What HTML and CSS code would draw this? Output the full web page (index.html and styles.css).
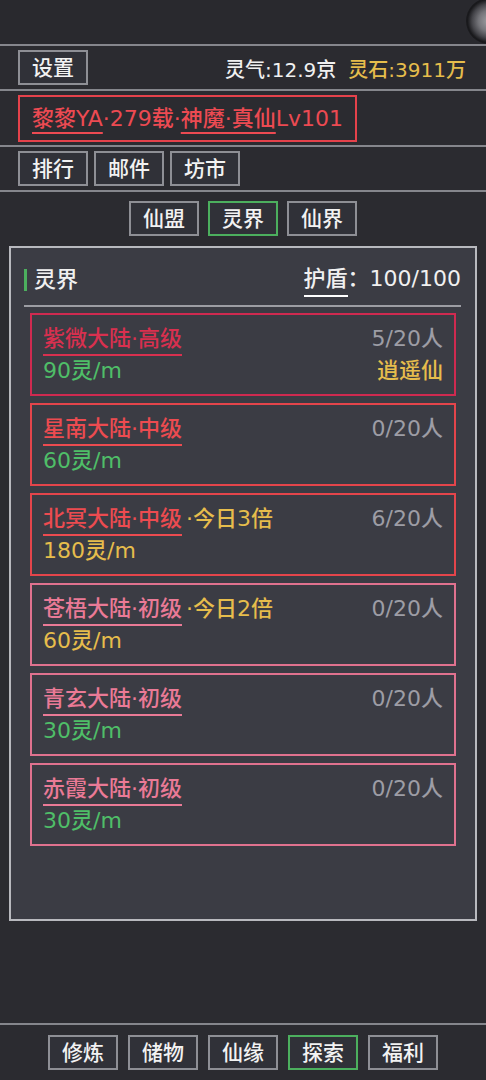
FILE: index.html
```html
<!DOCTYPE html>
<html lang="zh-CN">
<head>
  <meta charset="UTF-8" />
  <meta name="viewport" content="width=device-width, initial-scale=1.0"/>
  <title>灵界</title>
  <link rel="stylesheet" href="styles.css">
</head>
<body>
  <div class="app">
    <div class="topbar">
      <div class="float-btn"></div>
    </div>

    <div class="row row-stats">
      <button class="btn">设置</button>
      <div class="stats">
        <span class="stat">灵气:12.9京</span>
        <span class="stat gold">灵石:3911万</span>
      </div>
    </div>

    <div class="row row-name">
      <div class="name-box">
        <span class="ul">黎黎YA</span>·279载·<span class="ul">神魔·真仙</span>Lv101
      </div>
    </div>

    <div class="row row-menu">
      <button class="btn">排行</button>
      <button class="btn">邮件</button>
      <button class="btn">坊市</button>
    </div>

    <div class="tabs">
      <button class="btn">仙盟</button>
      <button class="btn active">灵界</button>
      <button class="btn">仙界</button>
    </div>

    <div class="panel">
      <div class="panel-head">
        <div class="panel-title">灵界</div>
        <div class="shield"><span class="shield-label">护盾</span>：100/100</div>
      </div>

      <div class="cards">
        <div class="card crimson">
          <div class="card-line">
            <span class="card-name">紫微大陆·高级</span>
            <span class="count">5/20人</span>
          </div>
          <div class="card-line">
            <span class="rate green">90灵/m</span>
            <span class="owner">逍遥仙</span>
          </div>
        </div>

        <div class="card red">
          <div class="card-line">
            <span class="card-name">星南大陆·中级</span>
            <span class="count">0/20人</span>
          </div>
          <div class="card-line">
            <span class="rate green">60灵/m</span>
          </div>
        </div>

        <div class="card red">
          <div class="card-line">
            <span class="card-name">北冥大陆·中级</span>
            <span class="bonus">·今日3倍</span>
            <span class="count">6/20人</span>
          </div>
          <div class="card-line">
            <span class="rate gold">180灵/m</span>
          </div>
        </div>

        <div class="card pink">
          <div class="card-line">
            <span class="card-name">苍梧大陆·初级</span>
            <span class="bonus">·今日2倍</span>
            <span class="count">0/20人</span>
          </div>
          <div class="card-line">
            <span class="rate gold">60灵/m</span>
          </div>
        </div>

        <div class="card pink">
          <div class="card-line">
            <span class="card-name">青玄大陆·初级</span>
            <span class="count">0/20人</span>
          </div>
          <div class="card-line">
            <span class="rate green">30灵/m</span>
          </div>
        </div>

        <div class="card pink">
          <div class="card-line">
            <span class="card-name">赤霞大陆·初级</span>
            <span class="count">0/20人</span>
          </div>
          <div class="card-line">
            <span class="rate green">30灵/m</span>
          </div>
        </div>
      </div>
    </div>

    <div class="bottom-nav">
      <button class="btn">修炼</button>
      <button class="btn">储物</button>
      <button class="btn">仙缘</button>
      <button class="btn active">探索</button>
      <button class="btn">福利</button>
    </div>
  </div>
</body>
</html>
```

FILE: styles.css
```css
* {
  box-sizing: border-box;
}
body {
  margin: 0;
  background: #2b2b30;
  color: #f0f0f0;
  font-family: "DejaVu Sans", "Noto Sans CJK SC", sans-serif;
  font-weight: 500;
}
.app {
  position: relative;
  width: 486px;
  height: 1080px;
  display: flex;
  flex-direction: column;
  overflow: hidden;
}
.topbar {
  height: 46px;
  background: #29292e;
  border-bottom: 2px solid #85868c;
}
.float-btn {
  position: absolute;
  top: -2px;
  right: -26px;
  width: 46px;
  height: 46px;
  border-radius: 50%;
  background: radial-gradient(circle at 50% 50%, #a0a0a4 0, #75757a 32%, #45454a 52%, #19191c 66%, #1f1f22 100%);
}
.btn {
  height: 35px;
  width: 70px;
  padding: 0;
  border: 2px solid #8e8f95;
  background: #303138;
  color: #f2f2f2;
  font-family: inherit;
  font-weight: 500;
  font-size: 21px;
  line-height: 30px;
}
.btn.active {
  border-color: #4caf5e;
}
.row {
  display: flex;
  align-items: center;
  padding: 0 18px;
  border-bottom: 2px solid #85868c;
}
.row-stats {
  height: 45px;
  justify-content: space-between;
  padding-right: 20px;
}
.stats {
  display: flex;
  gap: 12px;
  font-size: 20px;
  padding-top: 1px;
}
.gold {
  color: #e6bd4c;
}
.row-name {
  height: 56px;
}
.name-box {
  height: 47px;
  padding: 0 12px;
  border: 2px solid #e5424b;
  color: #ec4a52;
  font-size: 22px;
  line-height: 43px;
  white-space: nowrap;
}
.ul {
  text-decoration: underline;
  text-decoration-thickness: 2px;
  text-underline-offset: 6px;
}
.row-menu {
  height: 45px;
  gap: 6px;
}
.tabs {
  display: flex;
  justify-content: center;
  gap: 9px;
  padding: 9px 0 10px;
}
.panel {
  height: 675px;
  margin: 0 9px;
  padding: 14px 14px 0 13px;
  background: #3b3c44;
  border: 2px solid #b8b9be;
}
.panel-head {
  display: flex;
  justify-content: space-between;
  align-items: center;
  height: 36px;
  margin-bottom: 7px;
  font-size: 22px;
}
.panel-title {
  border-left: 3px solid #4caf5e;
  padding-left: 7px;
  line-height: 22px;
}
.shield {
  line-height: 32px;
}
.shield-label {
  display: inline-block;
  border-bottom: 2px solid #ffffff;
}
.cards {
  border-top: 2px solid #9c9da3;
  padding: 6px 5px 0 6px;
  display: flex;
  flex-direction: column;
  gap: 7px;
}
.card {
  height: 83px;
  border: 2px solid;
  padding: 9px 11px 0 11px;
  font-size: 22px;
}
.card-line {
  display: flex;
  align-items: flex-end;
  line-height: 30px;
}
.card-name {
  border-bottom: 2px solid;
}
.bonus {
  color: #e6bd4c;
  margin-left: 4px;
  align-self: flex-start;
}
.count {
  margin-left: auto;
  color: #9d9da5;
  align-self: flex-start;
}
.rate {
  line-height: 30px;
}
.owner {
  margin-left: auto;
  color: #e6bd4c;
  line-height: 30px;
}
.green {
  color: #4fbe68;
}
.crimson {
  border-color: #cf2a50;
  color: #d8304f;
}
.red {
  border-color: #e4454b;
  color: #ec4b50;
}
.pink {
  border-color: #e0728f;
  color: #ea7a96;
}
.bottom-nav {
  margin-top: auto;
  height: 57px;
  display: flex;
  justify-content: center;
  align-items: flex-start;
  gap: 10px;
  padding-top: 10px;
  border-top: 2px solid #85868c;
}
```
